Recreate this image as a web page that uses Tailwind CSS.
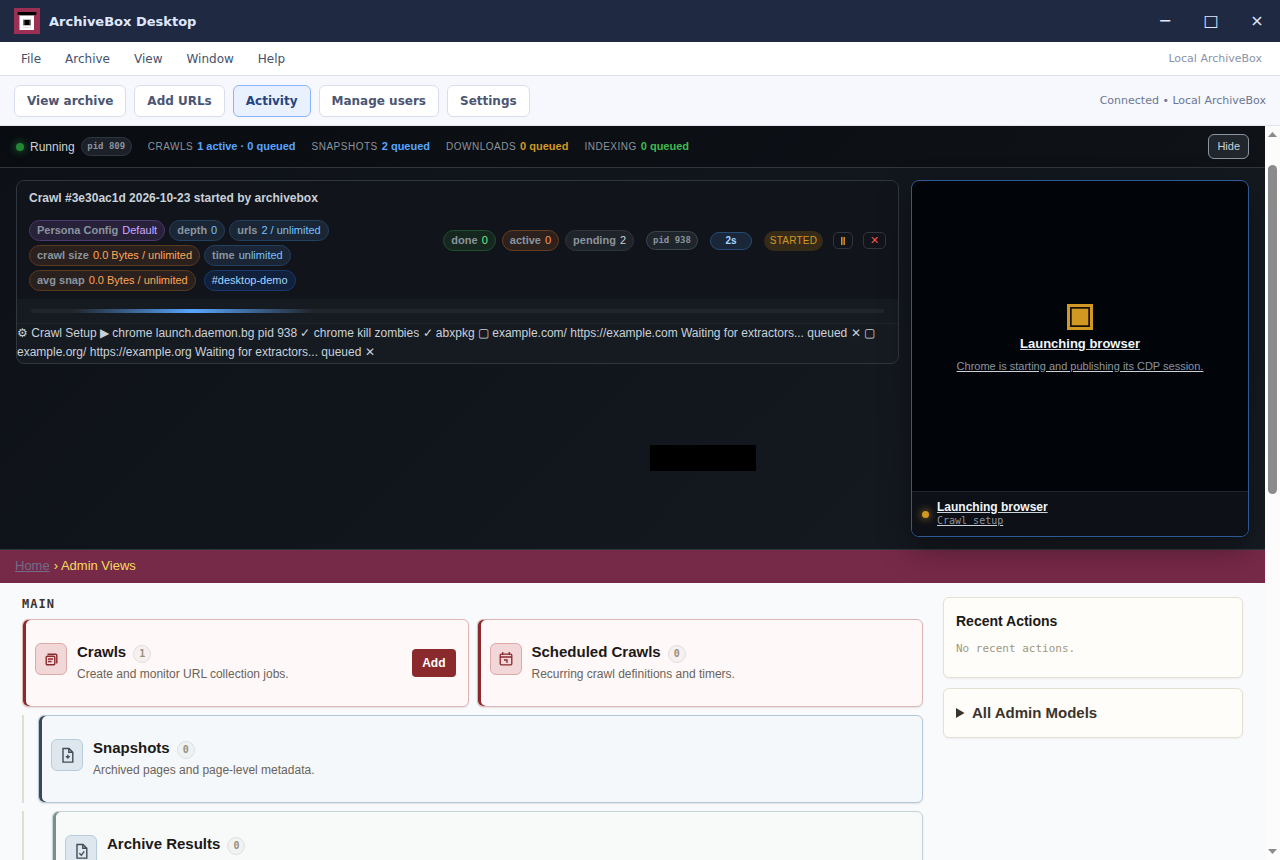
<!DOCTYPE html>
<html lang="en">
    <head>
        <meta charset="UTF-8" />
        <meta name="viewport" content="width=device-width, initial-scale=1.0" />
        <title>ArchiveBox Desktop</title>
        <script src="https://cdn.jsdelivr.net/npm/@tailwindcss/browser@4"></script>
    </head>
    <body
        class="flex h-screen flex-col overflow-hidden bg-[#f9fafc] font-['DejaVu_Sans',sans-serif]"
    >
        <!-- Title bar -->
        <header class="flex h-[42px] shrink-0 items-center bg-[#202942] pl-3.5 text-[#dfe8ff]">
            <svg class="size-[26px]" viewBox="0 0 26 26" aria-hidden="true">
                <rect width="26" height="26" fill="#9c2f54" />
                <rect x="5.5" y="7" width="14.5" height="15" fill="#fff" />
                <rect x="3.5" y="4" width="19" height="3" rx="1" fill="#000" />
                <rect x="5.5" y="7" width="14.5" height="1" fill="#999" />
                <rect x="9" y="11.500" width="8" height="6" fill="#777" />
                <rect x="10.5" y="12" width="5" height="5" fill="#000" />
                <rect x="9" y="19" width="8" height="1" fill="#ddd" />
            </svg>
            <h1 class="ml-[9px] pt-0.5 text-[13px] font-bold">ArchiveBox Desktop</h1>
            <div class="ml-auto flex h-full">
                <button type="button" aria-label="Minimize" class="w-[46px] text-base">−</button>
                <button type="button" aria-label="Maximize" class="w-[46px] text-base">□</button>
                <button type="button" aria-label="Close" class="w-[46px] text-base">×</button>
            </div>
        </header>

        <!-- Menu bar -->
        <nav class="flex h-[34px] shrink-0 items-center border-b border-[#dfe2ec] bg-white pr-[18px] pl-[9px] text-xs text-[#46516b]">
            <button type="button" class="px-3">File</button>
            <button type="button" class="px-3">Archive</button>
            <button type="button" class="px-3">View</button>
            <button type="button" class="px-3">Window</button>
            <button type="button" class="px-3">Help</button>
            <span class="ml-auto pt-0.5 text-[11px] text-[#8b93a7]">Local ArchiveBox</span>
        </nav>

        <!-- Toolbar -->
        <div class="flex h-[50px] shrink-0 items-center gap-2 border-b border-[#e2e5f0] bg-[#f6f8fd] px-3.5 text-xs text-[#4a5672]">
            <button type="button" class="h-8 rounded-md border border-[#d9deec] bg-white px-3 font-bold">View archive</button>
            <button type="button" class="h-8 rounded-md border border-[#d9deec] bg-white px-3 font-bold">Add URLs</button>
            <button type="button" class="h-8 rounded-md border border-[#8ab4ff] bg-[#e9f1ff] px-3 font-bold text-[#24457f]">Activity</button>
            <button type="button" class="h-8 rounded-md border border-[#d9deec] bg-white px-3 font-bold">Manage users</button>
            <button type="button" class="h-8 rounded-md border border-[#d9deec] bg-white px-3 font-bold">Settings</button>
            <span class="ml-auto pt-0.5 text-[11px] text-[#6b7793]">Connected • Local ArchiveBox</span>
        </div>

        <div class="flex min-h-0 flex-1">
            <div class="min-w-0 flex-1 overflow-hidden font-['Liberation_Sans',Arial,sans-serif]">
                <!-- Live progress -->
                <section class="relative z-10 border-b border-[#30363d] bg-linear-135 from-[#0d1117] to-[#161b22] text-[#c9d1d9]">
                    <div class="flex h-[42px] items-center border-b border-[#30363d] bg-black/25 px-4">
                        <span class="size-2 rounded-full bg-[#238636] shadow-[0_0_8px_#238636]"></span>
                        <span class="ml-1.5 text-xs">Running</span>
                        <span class="ml-1.5 h-[19px] w-[51px] rounded-full border border-[#30363d] bg-[#1c2028] text-center font-['DejaVu_Sans_Mono',monospace] text-[9px] leading-4 font-bold text-[#8b949e]">pid 809</span>
                        <div class="ml-4 flex gap-4 text-[11px]">
                            <span><span class="mr-1 text-[10px] tracking-wider text-[#8b949e]">CRAWLS</span><b class="text-[#58a6ff]">1 active · 0 queued</b></span>
                            <span><span class="mr-1 text-[10px] tracking-wider text-[#8b949e]">SNAPSHOTS</span><b class="text-[#58a6ff]">2 queued</b></span>
                            <span><span class="mr-1 text-[10px] tracking-wider text-[#8b949e]">DOWNLOADS</span><b class="text-[#d29922]">0 queued</b></span>
                            <span><span class="mr-1 text-[10px] tracking-wider text-[#8b949e]">INDEXING</span><b class="text-[#3fb950]">0 queued</b></span>
                        </div>
                        <button type="button" class="ml-auto h-[25px] rounded-md border border-[#8b949e] bg-[#21262d] px-2 text-[11px]">Hide</button>
                    </div>

                    <div class="flex items-start gap-3 px-4 py-3">
                        <article class="min-w-0 flex-1 overflow-hidden rounded-lg border border-[#30363d] bg-[#161b22]">
                            <div class="bg-[#11141b] px-3 pt-2 pb-2">
                                <h2 class="text-xs leading-[18px] font-bold">Crawl #3e30ac1d 2026-10-23 started by archivebox</h2>
                                <div class="mt-[13px] flex items-center justify-between text-[11px] leading-[19px]">
                                    <div class="flex w-[304px] flex-wrap gap-1 whitespace-nowrap">
                                        <span class="rounded-full border border-[#4c3a6e] bg-[#28213a] px-[7px] text-[#d2a8ff]"><b class="mr-1 text-[#8b949e]">Persona Config</b>Default</span>
                                        <span class="rounded-full border border-[#24405f] bg-[#1a2635] px-[7px] text-[#79c0ff]"><b class="mr-1 text-[#8b949e]">depth</b>0</span>
                                        <span class="rounded-full border border-[#24405f] bg-[#1a2635] px-[7px] text-[#79c0ff]"><b class="mr-1 text-[#8b949e]">urls</b>2 / unlimited</span>
                                        <span class="rounded-full border border-[#5c3a20] bg-[#2a211e] px-[7px] text-[#ffa657]"><b class="mr-1 text-[#8b949e]">crawl size</b>0.0 Bytes / unlimited</span>
                                        <span class="rounded-full border border-[#24405f] bg-[#1a2635] px-[7px] text-[#79c0ff]"><b class="mr-1 text-[#8b949e]">time</b>unlimited</span>
                                        <span class="rounded-full border border-[#5c3a20] bg-[#2a211e] px-[7px] text-[#ffa657]"><b class="mr-1 text-[#8b949e]">avg snap</b>0.0 Bytes / unlimited</span>
                                        <a href="#" class="ml-1 rounded-full border border-[#193a6e] bg-[#11213b] px-[7px] text-[#a5d6ff]">#desktop-demo</a>
                                    </div>
                                    <div class="-mt-[30px] flex items-center whitespace-nowrap">
                                        <span class="rounded-full border border-[#1f5130] bg-[#16271f] px-[7px] text-[#7ee787]"><b class="mr-1 text-[#8b949e]">done</b>0</span>
                                        <span class="ml-1.5 rounded-full border border-[#6b3d20] bg-[#2c211d] px-[7px] text-[#ff9b57]"><b class="mr-1 text-[#8b949e]">active</b>0</span>
                                        <span class="ml-1.5 rounded-full border border-[#30363d] bg-[#1f232a] px-[7px]"><b class="mr-1 text-[#8b949e]">pending</b>2</span>
                                        <span class="ml-3 h-[19px] w-[52px] rounded-full border border-[#3c444d] bg-[#1f252c] text-center font-['DejaVu_Sans_Mono',monospace] text-[9px] leading-4 font-bold text-[#8b949e]">pid 938</span>
                                        <span class="ml-3 h-[18px] w-[42px] rounded-full border border-[#264a73] bg-[#192739] text-center text-[10px] leading-4 font-bold text-[#a5d6ff]">2s</span>
                                        <span class="ml-3 h-5 w-[59px] rounded-full bg-[#362b18] text-center text-[10px] tracking-wide text-[#d29922]">STARTED</span>
                                        <button type="button" aria-label="Pause crawl" class="ml-2.5 flex h-[17px] w-5 items-center justify-center rounded-[5px] border border-[#30363d]">
                                            <i class="h-2 w-1 border-x border-[#d28a1c] bg-[#7d5a2a]"></i>
                                        </button>
                                        <button type="button" aria-label="Cancel crawl" class="ml-2.5 h-[17px] w-[23px] rounded-[5px] border border-[#30363d] text-[11px] leading-[15px] text-[#f85149]">✕</button>
                                    </div>
                                </div>
                            </div>
                            <div class="border-b border-[#21262d] px-3.5 py-2.5">
                                <div class="h-1 overflow-hidden rounded-full bg-[#21262d]">
                                    <div class="ml-[5%] h-1 w-[28%] bg-linear-to-r from-transparent via-[#58a6ff] to-transparent"></div>
                                </div>
                            </div>
                            <p class="pb-px text-xs leading-[19px]">
                                ⚙ Crawl Setup ▶ chrome launch.daemon.bg pid 938 ✓ chrome kill zombies ✓ abxpkg ▢ example.com/ https://example.com Waiting for extractors... queued ✕ ▢ example.org/ https://example.org Waiting for extractors... queued ✕
                            </p>
                        </article>

                        <a href="#" class="flex h-[357px] w-[338px] shrink-0 flex-col overflow-hidden rounded-lg border border-[#2b5a94] bg-[#010409] underline shadow-[0_12px_32px_rgba(0,0,0,0.35)]">
                            <span class="flex flex-1 flex-col items-center justify-center pt-1.5">
                                <svg class="size-[26px]" viewBox="0 0 26 26" aria-hidden="true">
                                    <rect x="1.5" y="1.5" width="23" height="23" fill="none" stroke="#d29922" stroke-width="3" />
                                    <rect x="4" y="4" width="18" height="18" fill="#d29922" stroke="#1c1508" stroke-width="1.500" />
                                </svg>
                                <span class="mt-1.5 text-[13px] leading-4 font-bold text-[#f0f6fc]">Launching browser</span>
                                <span class="mt-1.5 text-[11px] leading-4 text-[#8b949e]">Chrome is starting and publishing its CDP session.</span>
                            </span>
                            <span class="flex h-[45px] items-center gap-2 border-t border-[#21262d] bg-[#0d1017] px-2.5">
                                <span class="size-[7px] rounded-full bg-[#d29922] shadow-[0_0_8px_#d29922]"></span>
                                <span class="flex flex-col items-start">
                                    <span class="text-xs leading-[14px] font-bold text-[#f0f6fc]">Launching browser</span>
                                    <span class="font-['DejaVu_Sans_Mono',monospace] text-[10px] leading-[14px] text-[#8b949e]">Crawl setup</span>
                                </span>
                            </span>
                        </a>
                    </div>
                    <!-- Empty status overlay -->
                    <div class="absolute top-[319px] left-[650px] h-[26px] w-[106px] bg-black"></div>
                </section>

                <nav class="flex h-[33px] items-center gap-1 bg-[#772948] px-[15px] pb-0.5 text-[13px] text-[#f5dd5d]">
                    <a href="#" class="text-[#6f6d88] underline">Home</a>
                    <span>› Admin Views</span>
                </nav>

                <main class="flex gap-5 px-[22px] pt-3.5">
                    <div class="min-w-0 flex-1">
                        <h2 class="font-['DejaVu_Sans_Mono',monospace] text-xs leading-[14px] font-bold tracking-[1px] text-[#3d352b]">MAIN</h2>

                        <div class="mt-2 grid grid-cols-2 gap-2">
                            <div class="flex h-[88px] items-center gap-2.5 rounded-md border border-[#deb6b6] bg-[#fef8f8] px-3 shadow-[inset_3px_0_0_#8b2a2c,0_1px_2px_rgba(0,0,0,0.1)]">
                                <span class="mb-2 flex size-8 items-center justify-center rounded-md border border-[#dda9a9] bg-[#f1d7d7] text-[#8b2a2c]">
                                    <svg class="size-3.5" viewBox="-0.5 -1 14 14" fill="none" stroke="currentColor" stroke-width="1.4" aria-hidden="true">
                                        <rect x="1.7" y="3.2" width="8.6" height="8.6" rx="1" />
                                        <path d="M3 1.300h8.300a1 1 0 0 1 1 1V10.500M3.500 6h5M3.500 8.500h3.500" />
                                    </svg>
                                </span>
                                <div>
                                    <h3 class="flex h-5 items-center text-[15px] leading-[18px] font-bold text-[#1c1917]">
                                        <a href="#" class="pb-0.5">Crawls</a>
                                        <span class="mt-0.5 ml-[7px] size-[18px] rounded-full border border-[#e4dddd] bg-[#f6f1f0] text-center font-['DejaVu_Sans_Mono',monospace] text-[10px] leading-4 text-[#9a8f7d]">1</span>
                                    </h3>
                                    <p class="mt-0.5 text-xs leading-[18px] text-[#6b6359]">Create and monitor URL collection jobs.</p>
                                </div>
                                <a href="#" class="ml-auto rounded bg-[#8b2a2c] px-2.5 text-xs leading-7 font-bold text-white">Add</a>
                            </div>

                            <div class="flex h-[88px] items-center gap-2.5 rounded-md border border-[#deb6b6] bg-[#fef8f8] px-3 shadow-[inset_3px_0_0_#8b2a2c,0_1px_2px_rgba(0,0,0,0.1)]">
                                <span class="mb-2 flex size-8 items-center justify-center rounded-md border border-[#dda9a9] bg-[#f1d7d7] text-[#8b2a2c]">
                                    <svg class="size-3.5" viewBox="0 0 14 14" fill="none" stroke="currentColor" stroke-width="1.3" aria-hidden="true">
                                        <rect x="1.2" y="2.2" width="11.6" height="10.6" rx="1" />
                                        <path d="M1 5h12M3.700 0v3M10.300 0v3M5 8h3v3" />
                                    </svg>
                                </span>
                                <div>
                                    <h3 class="flex h-5 items-center text-[15px] leading-[18px] font-bold text-[#1c1917]">
                                        <a href="#" class="pb-0.5">Scheduled Crawls</a>
                                        <span class="mt-0.5 ml-[7px] size-[18px] rounded-full border border-[#e4dddd] bg-[#f6f1f0] text-center font-['DejaVu_Sans_Mono',monospace] text-[10px] leading-4 text-[#9a8f7d]">0</span>
                                    </h3>
                                    <p class="mt-0.5 text-xs leading-[18px] text-[#6b6359]">Recurring crawl definitions and timers.</p>
                                </div>
                            </div>
                        </div>

                        <div class="mt-2 border-l-2 border-[#e2dfd0] pl-3.5">
                            <div class="flex h-[88px] items-center gap-2.5 rounded-md border border-[#b6c8d8] bg-[#f4f8fb] px-3 shadow-[inset_3px_0_0_#3a4855,0_1px_2px_rgba(0,0,0,0.1)]">
                                <span class="mb-2 flex size-8 items-center justify-center rounded-md border border-[#b9ccd9] bg-[#dfe7ee] text-[#3f4c58]">
                                    <svg class="h-4 w-3.5" viewBox="-0.8 -0.3 14 16" fill="none" stroke="currentColor" stroke-width="1.4" aria-hidden="true">
                                        <path d="M2.200 1.200h6l3.800 3.800v9.800H2.200zM8 1.200V5h4M7 7.500v4M5 9.500h4" />
                                    </svg>
                                </span>
                                <div>
                                    <h3 class="flex h-5 items-center text-[15px] leading-[18px] font-bold text-[#1c1917]">
                                        <a href="#" class="pb-0.5">Snapshots</a>
                                        <span class="mt-0.5 ml-[7px] size-[18px] rounded-full border border-[#dde1e3] bg-[#eff2f3] text-center font-['DejaVu_Sans_Mono',monospace] text-[10px] leading-4 text-[#9a8f7d]">0</span>
                                    </h3>
                                    <p class="mt-0.5 text-xs leading-[18px] text-[#6b6359]">Archived pages and page-level metadata.</p>
                                </div>
                            </div>
                        </div>

                        <div class="mt-2 border-l-2 border-[#e2dfd0] pl-7">
                            <div class="flex h-[88px] items-center gap-2.5 rounded-md border border-[#c6d2d3] bg-[#f8faf9] px-3 shadow-[inset_3px_0_0_#7d8d90,0_1px_2px_rgba(0,0,0,0.1)]">
                                <span class="mb-2 flex size-8 items-center justify-center rounded-md border border-[#b9ccd9] bg-[#dfe7ee] text-[#3f4c58]">
                                    <svg class="h-4 w-3.5" viewBox="-0.8 -0.3 14 16" fill="none" stroke="currentColor" stroke-width="1.4" aria-hidden="true">
                                        <path d="M2.200 1.200h6l3.800 3.800v9.800H2.200zM8 1.200V5h4M4.500 10l2 2L9.500 8" />
                                    </svg>
                                </span>
                                <div>
                                    <h3 class="flex h-5 items-center text-[15px] leading-[18px] font-bold text-[#1c1917]">
                                        <a href="#" class="pb-0.5">Archive Results</a>
                                        <span class="mt-0.5 ml-[7px] size-[18px] rounded-full border border-[#dde1e3] bg-[#f1f3f2] text-center font-['DejaVu_Sans_Mono',monospace] text-[10px] leading-4 text-[#9a8f7d]">0</span>
                                    </h3>
                                    <p class="mt-0.5 h-[18px]"></p>
                                </div>
                            </div>
                        </div>
                    </div>

                    <aside class="flex w-[300px] shrink-0 flex-col gap-2.5">
                        <section class="h-[81px] rounded-md border border-[#e5e0d3] bg-[#fefdf9] px-3 pt-3.5 shadow-xs">
                            <h2 class="text-sm leading-[18px] font-bold text-[#1c1917]">Recent Actions</h2>
                            <p class="mt-[11px] font-['DejaVu_Sans_Mono',monospace] text-[11px] leading-4 text-[#a09882]">No recent actions.</p>
                        </section>
                        <details class="rounded-md border border-[#e5e0d3] bg-[#fefdf9] px-3 py-3.5 shadow-xs">
                            <summary class="text-[15px] leading-5 font-bold text-[#3b342b]">All Admin Models</summary>
                        </details>
                    </aside>
                </main>
            </div>

            <!-- Scrollbar -->
            <div class="flex w-[15px] shrink-0 flex-col items-center justify-between bg-[#fcfcfc] py-1.5 text-[#8b8b8b]" aria-hidden="true">
                <svg class="h-[5px] w-[9px]" viewBox="0 0 9 5"><path d="M0 5L4.500 0L9 5z" fill="currentColor" /></svg>
                <div class="mt-7 mb-auto h-[329px] w-[9px] rounded-full bg-[#8b8b8b]"></div>
                <svg class="h-[5px] w-[9px]" viewBox="0 0 9 5"><path d="M0 0L4.500 5L9 0z" fill="currentColor" /></svg>
            </div>
        </div>
    </body>
</html>
